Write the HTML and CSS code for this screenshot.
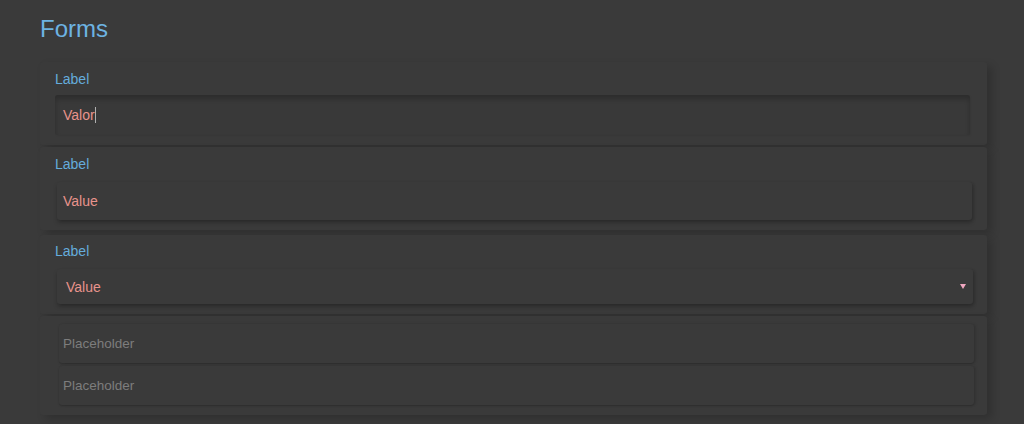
FILE: index.html
```html
<!DOCTYPE html>
<html>
<head>
<meta charset="utf-8">
<link rel="stylesheet" href="styles.css">
</head>
<body>
<main class="page">
  <h1 class="title">Forms</h1>
  <section class="card card-first">
    <label class="label">Label</label>
    <div class="field field-focus"><span class="value">Valor</span><span class="caret"></span></div>
  </section>
  <section class="card card-second">
    <label class="label">Label</label>
    <div class="field field-raised"><span class="value">Value</span></div>
  </section>
  <section class="card card-select">
    <label class="label">Label</label>
    <div class="field field-raised field-select"><span class="value">Value</span><span class="arrow"></span></div>
  </section>
  <section class="card card-plain">
    <div class="field field-flat"><span class="placeholder">Placeholder</span></div>
    <div class="field field-flat"><span class="placeholder">Placeholder</span></div>
  </section>
</main>
</body>
</html>
```
FILE: styles.css
```css
html, body {
  margin: 0;
  padding: 0;
  background: #3a3a3a;
  font-family: "Liberation Sans", Arial, sans-serif;
  height: 100%;
  overflow: hidden;
}
.page {
  padding: 15px 37px 0 40px;
  display: flex;
  flex-direction: column;
  gap: 2px;
}
.title {
  margin: 0 0 17px 0;
  font-weight: normal;
  font-size: 24px;
  line-height: 28px;
  color: #6db3e2;
}
.card {
  background: #3a3a3a;
  box-shadow: 5px 4px 8px rgba(0,0,0,0.18);
  border-radius: 3px;
  padding: 9px 17px 10px 15px;
  display: flex;
  flex-direction: column;
}
.card-select {
  padding-top: 8px;
  margin-top: 3px;
}
.card-plain {
  padding: 8px 15px 10px 17px;
  gap: 3px;
}
.label {
  font-size: 14px;
  line-height: 16px;
  color: #65acdc;
  margin-bottom: 8px;
}
.card-second .label,
.card-select .label {
  margin-bottom: 10px;
}
.field {
  display: flex;
  align-items: center;
  height: 40px;
  padding: 0 8px;
  font-size: 14px;
  border-radius: 3px;
  background: #3a3a3a;
}
.field-focus {
  box-shadow: inset 0 4px 5px rgba(0,0,0,0.22), 1px 1px 2px rgba(0,0,0,0.06);
  background: #393939;
  padding-left: 8px;
}
.field-raised {
  height: 38px;
  margin-left: 2px;
  margin-right: -2px;
  padding-left: 6px;
  box-shadow: 0 3px 4px rgba(0,0,0,0.2), 2px 1px 3px rgba(0,0,0,0.12);
}
.field-select {
  padding-left: 9px;
  margin-right: -3px;
  height: 35px;
}
.field-flat {
  height: 39px;
  margin-left: 2px;
  margin-right: -2px;
  padding-left: 4px;
  box-shadow: 0 1px 2px rgba(0,0,0,0.18), 2px 0 3px rgba(0,0,0,0.1);
}
.value {
  color: #e8938c;
  font-size: 14px;
}
.placeholder {
  color: #7d7d7d;
  font-size: 13.5px;
}
.caret {
  display: inline-block;
  width: 1px;
  height: 16px;
  background: #b0b0b0;
}
.arrow {
  margin-left: auto;
  margin-right: -1px;
  width: 0;
  height: 0;
  border-left: 3px solid transparent;
  border-right: 3px solid transparent;
  border-top: 5px solid #f0a7c0;
}
```
